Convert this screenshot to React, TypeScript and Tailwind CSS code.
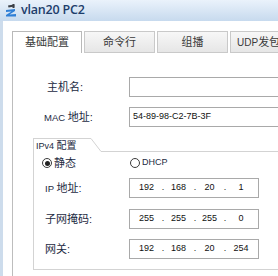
import React from 'react';

const cjk = "font-['Liberation_Sans','Noto_Sans_CJK_SC',sans-serif]";
const latin = "font-['Liberation_Sans','DejaVu_Sans',sans-serif]";

// 标题栏图标
function PcIcon() {
  return (
    <svg width="12" height="13" viewBox="0 0 12 13">
      <path d="M3 1.5 L9 0.5 L9.5 2.5 L3.5 3.5 Z" fill="#3a3f47" />
      <rect x="7.5" y="0" width="2" height="4" fill="#3a3f47" />
      <path d="M1 6 L10 5 L10 7 L4.5 10.5 L11 10 L11 12.5 L1 12.5 L1 11 L6.5 7.5 L1 8 Z" fill="#2f7fd6" />
    </svg>
  );
}

function Radio({ checked }: { checked?: boolean }) {
  return (
    <span className="w-[10px] h-[10px] rounded-full border border-[#3b3b3b] bg-white flex items-center justify-center">
      {checked && <span className="w-[5px] h-[5px] rounded-full bg-[#222]" />}
    </span>
  );
}

function IpBox({ parts }: { parts: string[] }) {
  const segW = ['w-[29px]', 'w-[27px]', 'w-[23px]', 'w-[24px]'];
  const dotW = ['w-[4px]', 'w-[6px]', 'w-[8px]'];
  return (
    <div className={`w-[130px] h-[20px] border border-[#a9a9a9] bg-white flex items-center pl-[2px] text-[9px] text-[#111] ${latin}`}>
      {parts.map((p, i) => (
        <React.Fragment key={i}>
          <span className={`${segW[i]} text-center`}>{p}</span>
          {i < 3 && <span className={`${dotW[i]} text-center`}>.</span>}
        </React.Fragment>
      ))}
    </div>
  );
}

const tabs = ['基础配置', '命令行', '组播', 'UDP发包工具'];

export default function App() {
  return (
    <div className={`w-[278px] h-[276px] overflow-hidden bg-white flex flex-col ${cjk}`}>
      {/* 标题栏 */}
      <div className="h-[21px] shrink-0 flex items-center pl-[5px] gap-[4px] bg-gradient-to-b from-[#eaf2fb] to-[#c7daee]">
        <PcIcon />
        <span className="text-[12.5px] font-semibold text-[#1d3d6b] font-['Open_Sans','DejaVu_Sans',sans-serif] tracking-[-0.2px]">vlan20 PC2</span>
      </div>

      <div className="flex-1 flex flex-col border-l-[3px] border-[#cddcec] pt-[10px] pl-[9px]">
        {/* 选项卡 */}
        <div className="flex gap-[2px] h-[22px] shrink-0">
          {tabs.map((t, i) => (
            <div
              key={t}
              className={`${i === 0 ? 'w-[70px] bg-white border-[#b9b9b9] border-b-0' : 'w-[71px] bg-gradient-to-b from-[#f7f7f7] to-[#e6e6e6] border-[#c9c9c9]'} shrink-0 border flex items-center justify-center text-[11px] text-[#3a3a3a] whitespace-nowrap overflow-hidden`}
            >
              {i === 3 ? <span className="pl-[6px] w-full"><span className={`${latin} text-[10px]`}>UDP</span>发包工具</span> : t}
            </div>
          ))}
        </div>

        {/* 内容面板 */}
        <div className="flex-1 border-l border-[#bdbdbd] flex flex-col text-[11px] text-[#1c2a42]">
          <div className="flex items-center mt-[24px] h-[20px]">
            <span className="w-[116px] pl-[34px]">主机名:</span>
            <div className="flex-1 h-[20px] border border-[#a9a9a9] border-r-0 bg-white" />
          </div>
          <div className="flex items-center mt-[10px] h-[20px]">
            <span className="w-[116px] pl-[31px]"><span className={`${latin} text-[9.5px]`}>MAC </span>地址:</span>
            <div className={`flex-1 h-[20px] border border-[#a9a9a9] border-r-0 bg-white flex items-center pl-[3px] text-[9px] text-[#111] ${latin}`}>
              54-89-98-C2-7B-3F
            </div>
          </div>

          {/* IPv4 配置 */}
          <div className="mt-[11px] ml-[20px] border-l border-b border-[#d3d3d3] flex flex-col pb-[10px]">
            <div className="flex h-[14px]">
              <div className="w-[57px] border-t border-[#d3d3d3] pl-[2px] text-[10px] leading-[13px] whitespace-nowrap">
                <span className={`${latin} text-[9px]`}>IPv4 </span>配置
              </div>
              <svg width="10" height="14" className="shrink-0">
                <line x1="0" y1="0.5" x2="10" y2="13.5" stroke="#d3d3d3" />
              </svg>
              <div className="flex-1 border-b border-[#d3d3d3]" />
            </div>

            <div className="flex items-center h-[14px] mt-[4px] pl-[8px]">
              <div className="w-[88px] flex items-center gap-[2px]">
                <Radio checked />
                <span>静态</span>
              </div>
              <div className="flex items-center gap-[2px]">
                <Radio />
                <span className={`${latin} text-[9px]`}>DHCP</span>
              </div>
            </div>

            <div className="flex items-center mt-[8px]">
              <span className="w-[95px] pl-[11px]"><span className={`${latin} text-[9.5px]`}>IP </span>地址:</span>
              <IpBox parts={['192', '168', '20', '1']} />
            </div>
            <div className="flex items-center mt-[11px]">
              <span className="w-[95px] pl-[11px]">子网掩码:</span>
              <IpBox parts={['255', '255', '255', '0']} />
            </div>
            <div className="flex items-center mt-[10px]">
              <span className="w-[95px] pl-[11px]">网关:</span>
              <IpBox parts={['192', '168', '20', '254']} />
            </div>
          </div>
        </div>
      </div>
    </div>
  );
}
